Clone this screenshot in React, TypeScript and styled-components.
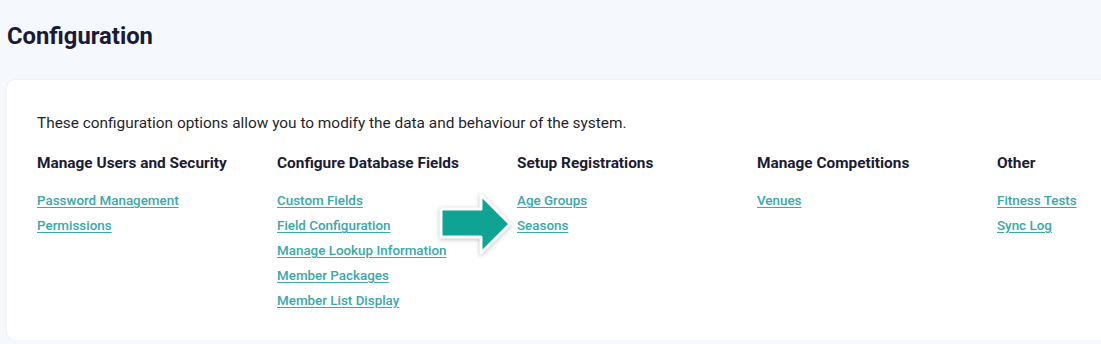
import styled, { createGlobalStyle } from "styled-components";

type Section = {
	title: string;
	links: string[];
};

const sections: Section[] = [
	{ title: "Manage Users and Security", links: ["Password Management", "Permissions"] },
	{
		title: "Configure Database Fields",
		links: ["Custom Fields", "Field Configuration", "Manage Lookup Information", "Member Packages", "Member List Display"],
	},
	{ title: "Setup Registrations", links: ["Age Groups", "Seasons"] },
	{ title: "Manage Competitions", links: ["Venues"] },
	{ title: "Other", links: ["Fitness Tests", "Sync Log"] },
];

const GlobalStyle = createGlobalStyle`
	html, body {
		margin: 0;
		background: #f5f8fc;
		font-family: Roboto, "Liberation Sans", sans-serif;
		overflow: hidden;
	}
`;

const Arrow = () => (
	<Styled.ArrowSvg width="82" height="66" viewBox="0 0 82 66">
		<path
			d="M4 16 H44 V2 L73 31 L44 60 V44 H4 Z"
			fill="#0fa394"
			stroke="#ffffff"
			strokeWidth="3"
			strokeLinejoin="round"
		/>
	</Styled.ArrowSvg>
);

const App = () => {
	return (
		<>
			<GlobalStyle />
			<Styled.Page>
				<StyledText.Heading>Configuration</StyledText.Heading>
				<Styled.Card>
					<StyledText.Intro>
						These configuration options allow you to modify the data and behaviour of the system.
					</StyledText.Intro>
					<Styled.Columns>
						{sections.map((section, i) => (
							<Styled.Column key={section.title}>
								<StyledText.ColumnTitle>{section.title}</StyledText.ColumnTitle>
								<Styled.LinkList>
									{section.links.map((link) => (
										<li key={link}>
											<StyledText.Link href="#">{link}</StyledText.Link>
										</li>
									))}
								</Styled.LinkList>
								{i === 1 && <Arrow />}
							</Styled.Column>
						))}
					</Styled.Columns>
				</Styled.Card>
			</Styled.Page>
		</>
	);
};

export default App;

const Styled = {
	Page: styled.div`
		padding: 21px 0 0 7px;
		width: 1101px;
		box-sizing: border-box;
		overflow: hidden;
	`,
	Card: styled.section`
		margin-top: 29px;
		background: #ffffff;
		border-radius: 8px 0 0 8px;
		padding: 34px 30px 33px;
		height: 260px;
		box-sizing: border-box;
		box-shadow: 0 0 2px rgba(200, 214, 230, 0.5);
	`,
	Columns: styled.div`
		display: grid;
		grid-template-columns: repeat(5, 240px);
		margin-top: 21px;
	`,
	Column: styled.div`
		position: relative;
	`,
	LinkList: styled.ul`
		list-style: none;
		margin: 18px 0 0;
		padding: 0;
		display: flex;
		flex-direction: column;
		gap: 7px;
		li {
			height: 18px;
			line-height: 18px;
		}
	`,
	ArrowSvg: styled.svg`
		position: absolute;
		left: 160px;
		top: 40px;
		filter: drop-shadow(0 1px 2px rgba(0, 0, 0, 0.25));
	`,
};

const StyledText = {
	Heading: styled.h1`
		margin: 0;
		font-size: 23.8px;
		line-height: 30px;
		font-weight: 700;
		color: #1b1b33;
	`,
	Intro: styled.p`
		margin: 0;
		font-size: 15.4px;
		line-height: 18px;
		color: #1f1f2b;
	`,
	ColumnTitle: styled.h2`
		margin: 0;
		font-size: 15.4px;
		line-height: 20px;
		font-weight: 700;
		color: #1b1b33;
	`,
	Link: styled.a`
		font-size: 13.4px;
		font-weight: 500;
		color: #3aa8a8;
		text-decoration: underline;
		text-underline-offset: 2px;
	`,
};
